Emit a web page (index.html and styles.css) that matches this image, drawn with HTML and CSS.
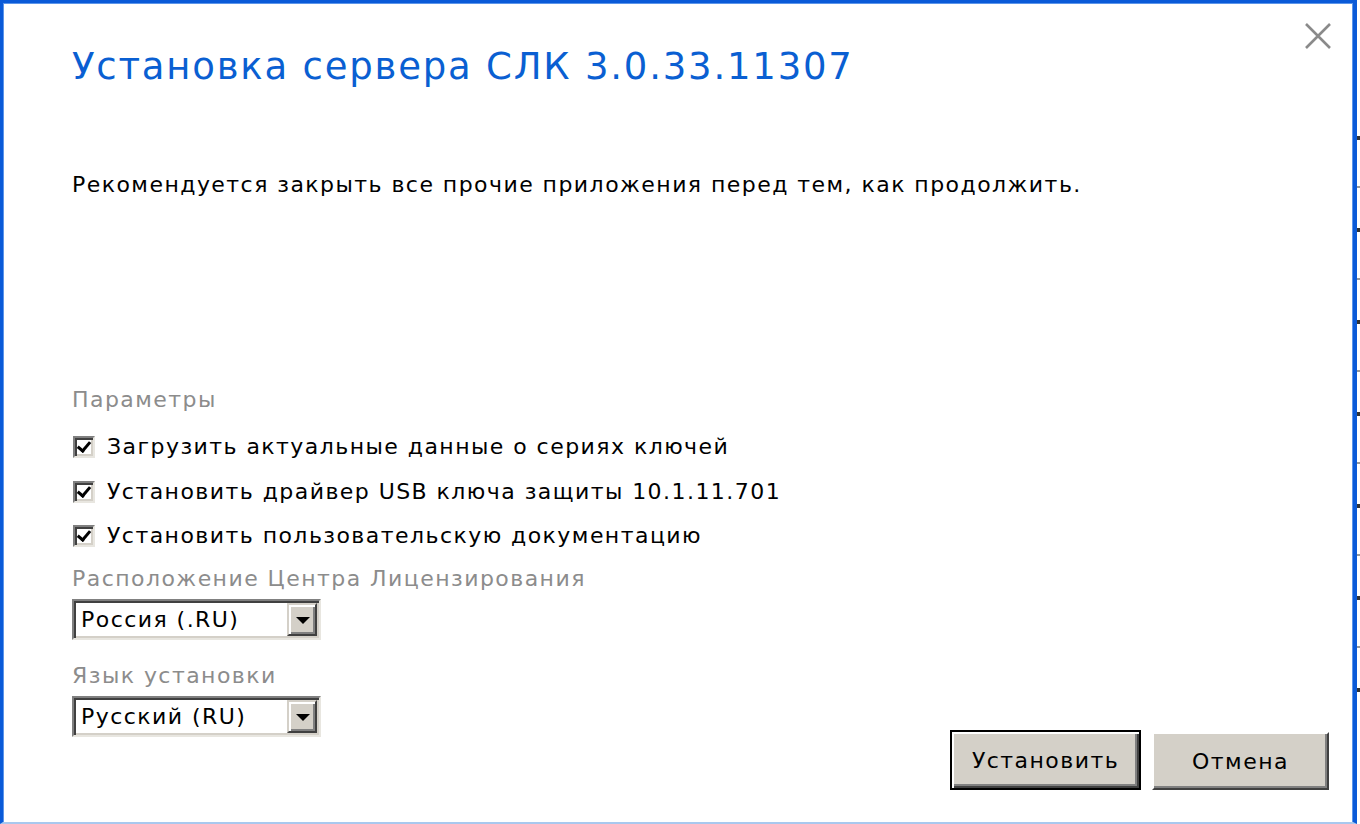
FILE: index.html
```html
<!DOCTYPE html>
<html lang="ru">
<head>
    <meta charset="UTF-8">
    <meta name="viewport" content="width=device-width, initial-scale=1.0">
    <title>Установка сервера СЛК</title>
    <link rel="stylesheet" href="styles.css">
</head>
<body>
    <div class="screen">
        <div class="dialog">
            <button class="close" title="Закрыть">
                <svg width="28" height="28" viewBox="0 0 28 28">
                    <path d="M2 2 L26 26 M26 2 L2 26" stroke="#8a8a8a" stroke-width="2.6" fill="none"/>
                </svg>
            </button>

            <h1 class="title">Установка сервера СЛК 3.0.33.11307</h1>
            <p class="note">Рекомендуется закрыть все прочие приложения перед тем, как продолжить.</p>

            <div class="bottom">
                <div class="params">
                    <div class="label">Параметры</div>
                    <label class="check"><span class="box"></span>Загрузить актуальные данные о сериях ключей</label>
                    <label class="check"><span class="box"></span>Установить драйвер USB ключа защиты 10.1.11.701</label>
                    <label class="check check-last"><span class="box"></span>Установить пользовательскую документацию</label>

                    <div class="label label-sel">Расположение Центра Лицензирования</div>
                    <div class="select">
                        <span class="select-text">Россия (.RU)</span>
                        <span class="select-btn"></span>
                    </div>

                    <div class="label label-sel label-lang">Язык установки</div>
                    <div class="select">
                        <span class="select-text">Русский (RU)</span>
                        <span class="select-btn"></span>
                    </div>
                </div>

                <div class="buttons">
                    <button class="btn btn-default">Установить</button>
                    <button class="btn">Отмена</button>
                </div>
            </div>
        </div>
        <div class="edge"></div>
    </div>
</body>
</html>
```

FILE: styles.css
```css
body {
    margin: 0;
    background: #fff;
    font-family: "DejaVu Sans", Verdana, sans-serif;
    overflow: hidden;
}
.screen {
    display: flex;
    width: 1360px;
    height: 824px;
}
.dialog {
    position: relative;
    box-sizing: border-box;
    width: 1357px;
    height: 824px;
    background: #fff;
    border-left: 3px solid #0a5ad8;
    border-top: 3px solid #0a5ad8;
    border-right: 4px solid #0a5ad8;
    border-bottom: 2px solid #a9c8ee;
    box-shadow: inset 1px 1px 0 #5c95ea, inset -1px 0 0 #5c95ea;
    padding: 0 24px 0 69px;
    display: flex;
    flex-direction: column;
}
.edge {
    width: 3px;
    background: #fff;
    background-image: repeating-linear-gradient(#fff 0 40px, #333 40px 44px, #fff 44px 90px, #999 90px 92px);
    background-position: 0 96px;
    background-repeat: no-repeat;
    background-size: 3px 640px;
}
.close {
    position: absolute;
    top: 19px;
    right: 21px;
    padding: 0;
    border: 0;
    background: none;
    width: 28px;
    height: 28px;
}
.title {
    margin: 40px 0 0;
    font-size: 37px;
    font-weight: normal;
    color: #0a5fd2;
    line-height: 48px;
    letter-spacing: 1.8px;
}
.note {
    margin: 80px 0 0;
    font-size: 22px;
    line-height: 28px;
    color: #000;
    letter-spacing: 1.45px;
}
.bottom {
    flex: 1;
    margin-top: 187px;
    display: flex;
    justify-content: space-between;
    align-items: flex-start;
}
.params {
    display: flex;
    flex-direction: column;
}
.label {
    font-size: 22px;
    line-height: 28px;
    color: #8c8c8c;
    letter-spacing: 1.45px;
}
.check {
    display: flex;
    align-items: center;
    gap: 12px;
    margin-top: 17px;
    font-size: 22px;
    line-height: 28px;
    color: #000;
    letter-spacing: 1.45px;
}
.check:first-of-type {
    margin-top: 19px;
}
.check-last {
    margin-top: 16px;
}
.box {
    position: relative;
    box-sizing: border-box;
    width: 22px;
    height: 22px;
    margin-left: 1px;
    background: #fff;
    border-top: 2px solid #808080;
    border-left: 2px solid #808080;
    border-right: 2px solid #e8e6e0;
    border-bottom: 2px solid #e8e6e0;
    box-shadow: inset 2px 2px 0 #404040, inset -2px -2px 0 #d4d0c8;
}
.box::after {
    content: "";
    position: absolute;
    left: 5px;
    top: 1px;
    width: 5px;
    height: 10px;
    border-right: 3px solid #000;
    border-bottom: 3px solid #000;
    transform: rotate(40deg);
}
.label-sel {
    margin-top: 15px;
}
.label-lang {
    margin-top: 22px;
}
.select {
    box-sizing: border-box;
    display: flex;
    align-items: center;
    justify-content: space-between;
    width: 249px;
    height: 41px;
    margin-top: 6px;
    background: #fff;
    border-top: 2px solid #808080;
    border-left: 2px solid #808080;
    border-right: 2px solid #e8e6e0;
    border-bottom: 2px solid #e8e6e0;
    box-shadow: inset 2px 2px 0 #404040, inset -2px -2px 0 #d4d0c8;
    padding: 2px 2px 2px 7px;
}
.select-text {
    font-size: 22px;
    color: #000;
    letter-spacing: 1.45px;
}
.select-btn {
    position: relative;
    box-sizing: border-box;
    width: 30px;
    height: 33px;
    background: #d4d0c8;
    border-top: 2px solid #d4d0c8;
    border-left: 2px solid #d4d0c8;
    border-right: 2px solid #404040;
    border-bottom: 2px solid #404040;
    box-shadow: inset 2px 2px 0 #fff, inset -2px -2px 0 #808080;
}
.select-btn::after {
    content: "";
    position: absolute;
    left: 7px;
    top: 12px;
    border-left: 7px solid transparent;
    border-right: 7px solid transparent;
    border-top: 7px solid #000;
}
.buttons {
    align-self: flex-end;
    display: flex;
    align-items: flex-end;
    gap: 11px;
    margin-bottom: 32px;
}
.btn {
    box-sizing: border-box;
    height: 58px;
    width: 177px;
    font-family: "DejaVu Sans", Verdana, sans-serif;
    font-size: 22px;
    letter-spacing: 1.45px;
    color: #000;
    background: #d4d0c8;
    border-top: 2px solid #fff;
    border-left: 2px solid #fff;
    border-right: 2px solid #404040;
    border-bottom: 2px solid #404040;
    box-shadow: inset -2px -2px 0 #808080;
    padding: 0;
}
.btn-default {
    width: 191px;
    height: 60px;
    border: 2px solid #000;
    box-shadow: inset 2px 2px 0 #fff, inset -2px -2px 0 #404040, inset -4px -4px 0 #808080;
}
```
